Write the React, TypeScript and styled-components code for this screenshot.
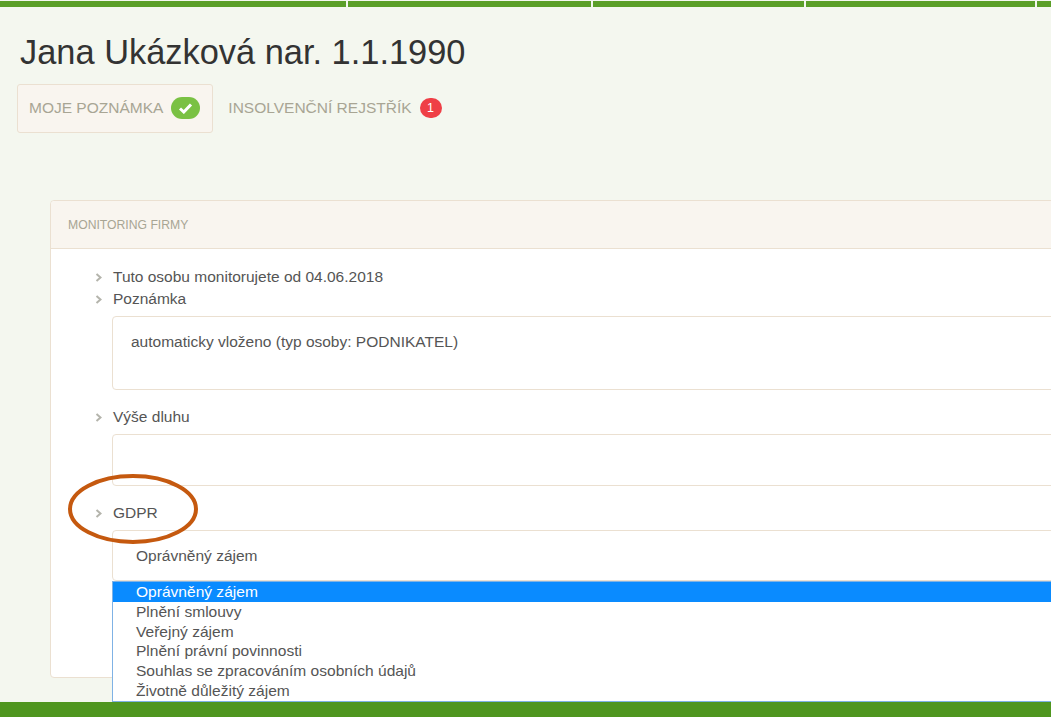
import React from "react";
import styled, { createGlobalStyle } from "styled-components";

const NAV_SEGMENTS = [346, 243, 211, 229, 14];

const GDPR_OPTIONS = [
  "Oprávněný zájem",
  "Plnění smlouvy",
  "Veřejný zájem",
  "Plnění právní povinnosti",
  "Souhlas se zpracováním osobních údajů",
  "Životně důležitý zájem",
];

const GlobalStyle = createGlobalStyle`
  html, body {
    margin: 0;
    padding: 0;
    height: 717px;
    overflow: hidden;
    background: #f4f7ef;
    font-family: "Liberation Sans", Arial, sans-serif;
  }
`;

const Page = styled.div`
  position: relative;
  width: 1051px;
  height: 717px;
  overflow: hidden;
  display: flex;
  flex-direction: column;
`;

const TopNav = styled.div`
  display: flex;
  gap: 2px;
  height: 6px;
  padding-top: 1px;
  flex: none;
`;

const NavSegment = styled.div<{ $width: number }>`
  width: ${(p) => p.$width}px;
  flex: none;
  background: #5b9f28;
`;

const Main = styled.div`
  flex: 1;
  min-height: 0;
  padding: 26px 0 0 17px;
`;

const Title = styled.h1`
  margin: 0 0 13px 3px;
  font-size: 34.4px;
  line-height: 38px;
  font-weight: 400;
  color: #333333;
`;

const Tabs = styled.div`
  display: flex;
  align-items: center;
`;

const Tab = styled.div<{ $active?: boolean }>`
  display: flex;
  align-items: center;
  gap: 8px;
  height: 49px;
  box-sizing: border-box;
  padding: 0 12px 1px 11px;
  margin-right: 3px;
  font-size: 15.5px;
  color: #a8a594;
  border: 1px solid ${(p) => (p.$active ? "#ebe0d1" : "transparent")};
  border-radius: 3px;
  background: ${(p) => (p.$active ? "#f9f5ef" : "transparent")};
`;

const CheckBadge = styled.span`
  width: 29px;
  height: 22px;
  border-radius: 11px;
  background: #7ac143;
  display: flex;
  align-items: center;
  justify-content: center;
`;

const CountBadge = styled.span`
  width: 22px;
  height: 20px;
  border-radius: 10px;
  background: #ef3f46;
  color: #ffffff;
  font-size: 12.5px;
  display: flex;
  align-items: center;
  justify-content: center;
`;

const Panel = styled.section`
  width: 1100px;
  height: 478px;
  box-sizing: border-box;
  margin: 67px 0 0 33px;
  background: #ffffff;
  border: 1px solid #ebe0d1;
  border-radius: 4px;
`;

const PanelHeader = styled.header`
  height: 47px;
  padding-left: 17px;
  display: flex;
  align-items: center;
  background: #f9f5ef;
  border-bottom: 1px solid #ebe0d1;
  border-radius: 4px 4px 0 0;
  font-size: 12.2px;
  color: #a8a594;
`;

const PanelBody = styled.div`
  position: relative;
  padding: 17px 0 0 44px;
  font-size: 15.5px;
  color: #555555;
`;

const Label = styled.div<{ $gap?: number }>`
  display: flex;
  align-items: center;
  height: 22px;
  margin-top: ${(p) => p.$gap ?? 0}px;
`;

const Chevron = styled.svg`
  width: 7px;
  height: 9px;
  margin-right: 11px;
  flex: none;
`;

const Field = styled.div<{ $height: number }>`
  height: ${(p) => p.$height}px;
  box-sizing: border-box;
  margin: 6px 0 0 17px;
  padding: 16px 18px;
  border: 1px solid #ebe0d1;
  border-radius: 4px;
  background: #ffffff;
  line-height: 18px;
`;

const SelectField = styled(Field)`
  padding: 16px 23px;
`;

const Dropdown = styled.ul`
  position: absolute;
  left: 61px;
  top: 332px;
  width: 1000px;
  margin: 0;
  padding: 0;
  list-style: none;
  box-sizing: border-box;
  border: 1px solid #7fb2e5;
  background: #ffffff;
  z-index: 2;
`;

const Option = styled.li<{ $selected?: boolean }>`
  height: 19.8px;
  line-height: 19.8px;
  padding-left: 23px;
  font-size: 15.55px;
  color: ${(p) => (p.$selected ? "#ffffff" : "#555555")};
  background: ${(p) => (p.$selected ? "#0a8bff" : "transparent")};
`;

const Annotation = styled.svg`
  position: absolute;
  left: 66px;
  top: 473px;
  width: 134px;
  height: 72px;
  z-index: 3;
`;

const BottomBar = styled.div`
  position: absolute;
  left: 0;
  right: 0;
  bottom: 0;
  height: 15px;
  background: #4f961f;
  z-index: 4;
`;

const Arrow = () => (
  <Chevron viewBox="0 0 7 9">
    <path d="M1.5 1 L5.5 4.5 L1.5 8" fill="none" stroke="#b4b4ac" strokeWidth="2" />
  </Chevron>
);

const App = () => {
  return (
    <Page>
      <GlobalStyle />
      <TopNav>
        {NAV_SEGMENTS.map((w) => (
          <NavSegment key={w} $width={w} />
        ))}
      </TopNav>
      <Main>
        <Title>Jana Ukázková nar. 1.1.1990</Title>
        <Tabs>
          <Tab $active>
            MOJE POZNÁMKA
            <CheckBadge>
              <svg width="15" height="12" viewBox="0 0 15 12">
                <path d="M2 6.5 L5.8 10 L13 2.5" fill="none" stroke="#ffffff" strokeWidth="3" />
              </svg>
            </CheckBadge>
          </Tab>
          <Tab>
            INSOLVENČNÍ REJSTŘÍK
            <CountBadge>1</CountBadge>
          </Tab>
        </Tabs>
        <Panel>
          <PanelHeader>MONITORING FIRMY</PanelHeader>
          <PanelBody>
            <Label>
              <Arrow />
              Tuto osobu monitorujete od 04.06.2018
            </Label>
            <Label>
              <Arrow />
              Poznámka
            </Label>
            <Field $height={74}>automaticky vloženo (typ osoby: PODNIKATEL)</Field>
            <Label $gap={16}>
              <Arrow />
              Výše dluhu
            </Label>
            <Field $height={52} />
            <Label $gap={16}>
              <Arrow />
              GDPR
            </Label>
            <SelectField $height={51}>Oprávněný zájem</SelectField>
            <Dropdown>
              {GDPR_OPTIONS.map((o, i) => (
                <Option key={o} $selected={i === 0}>
                  {o}
                </Option>
              ))}
            </Dropdown>
          </PanelBody>
        </Panel>
      </Main>
      <Annotation viewBox="0 0 134 72">
        <ellipse cx="67" cy="36" rx="63" ry="33" fill="none" stroke="#c5590f" strokeWidth="4" />
      </Annotation>
      <BottomBar />
    </Page>
  );
};

export default App;
